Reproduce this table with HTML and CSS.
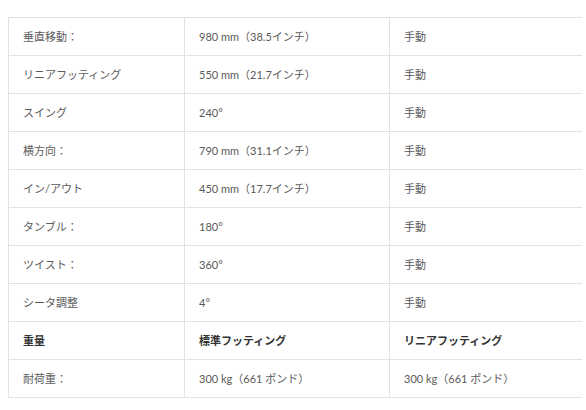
FILE: index.html
```html
<!DOCTYPE html>
<html lang="ja">
<head>
<meta charset="utf-8">
<title>仕様</title>
<link rel="stylesheet" href="styles.css">
</head>
<body>
<table class="spec">
  <colgroup>
    <col class="c1">
    <col class="c2">
    <col class="c3">
  </colgroup>
  <tbody>
    <tr><td>垂直移動：</td><td>980 mm（38.5インチ）</td><td>手動</td></tr>
    <tr><td>リニアフッティング</td><td>550 mm（21.7インチ）</td><td>手動</td></tr>
    <tr><td>スイング</td><td>240°</td><td>手動</td></tr>
    <tr><td>横方向：</td><td>790 mm（31.1インチ）</td><td>手動</td></tr>
    <tr><td>イン/アウト</td><td>450 mm（17.7インチ）</td><td>手動</td></tr>
    <tr><td>タンブル：</td><td>180°</td><td>手動</td></tr>
    <tr><td>ツイスト：</td><td>360°</td><td>手動</td></tr>
    <tr><td>シータ調整</td><td>4°</td><td>手動</td></tr>
    <tr class="head"><td>重量</td><td>標準フッティング</td><td>リニアフッティング</td></tr>
    <tr><td>耐荷重：</td><td>300 kg（661 ポンド）</td><td>300 kg（661 ポンド）</td></tr>
  </tbody>
</table>
</body>
</html>
```

FILE: styles.css
```css
html, body {
  background: #ffffff;
}
body {
  margin: 17px 4px 0 8px;
  font-family: "Lato", "Noto Sans CJK JP", sans-serif;
  font-size: 11px;
  color: #5a5a5a;
}
.spec {
  width: 574px;
  border-collapse: collapse;
  table-layout: fixed;
}
.c1 { width: 176px; }
.c2 { width: 205px; }
.c3 { width: 193px; }
.spec td {
  height: 37px;
  padding: 0 14px;
  border: 1px solid #e2e2e2;
  vertical-align: middle;
  line-height: 16px;
  white-space: nowrap;
}
.head td {
  font-weight: 700;
  color: #333333;
}
```
